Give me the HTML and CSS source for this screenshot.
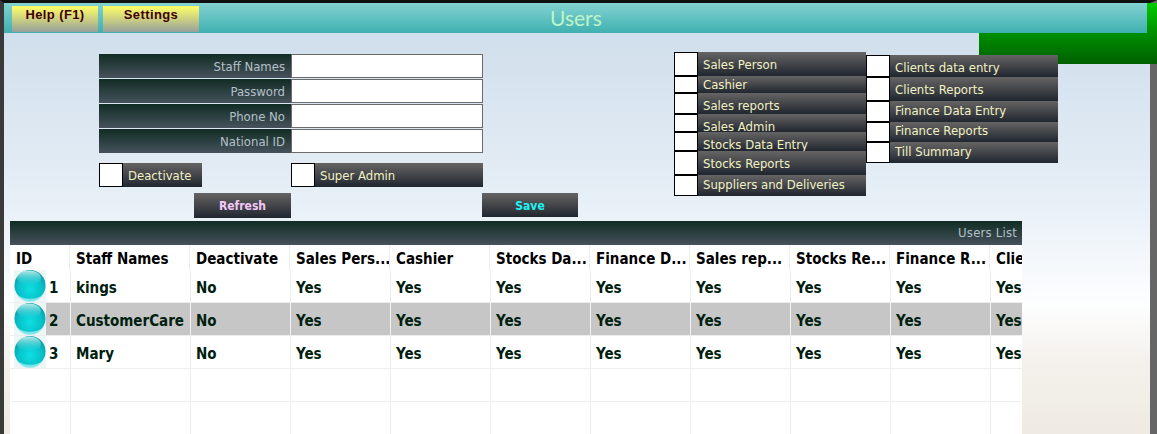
FILE: index.html
```html
<!DOCTYPE html>
<html lang="en">
<head>
<meta charset="utf-8">
<title>Users</title>
<link rel="stylesheet" href="styles.css">
</head>
<body>
<div class="window">
  <div class="green-block"></div>
  <header class="titlebar">
    <button class="menu-btn help">Help (F1)</button>
    <button class="menu-btn settings">Settings</button>
    <h1 class="title">Users</h1>
  </header>
  <main class="content">
    <section class="top">
      <form class="form">
        <div class="field"><label class="field-label">Staff Names</label><input class="field-input" type="text"></div>
        <div class="field"><label class="field-label">Password</label><input class="field-input" type="text"></div>
        <div class="field"><label class="field-label">Phone No</label><input class="field-input" type="text"></div>
        <div class="field"><label class="field-label">National ID</label><input class="field-input" type="text"></div>
        <div class="flags">
          <div class="check flag-short"><input class="box" type="checkbox"><span class="check-label">Deactivate</span></div>
          <div class="check flag-long"><input class="box" type="checkbox"><span class="check-label">Super Admin</span></div>
        </div>
        <div class="actions">
          <button class="action refresh" type="button">Refresh</button>
          <button class="action save" type="button">Save</button>
        </div>
      </form>
      <div class="perms perms-a">
        <div class="check perm h24"><input class="box" type="checkbox"><span class="check-label">Sales Person</span></div>
        <div class="check perm h17"><input class="box" type="checkbox"><span class="check-label lh15">Cashier</span></div>
        <div class="check perm h21"><input class="box" type="checkbox"><span class="check-label">Sales reports</span></div>
        <div class="check perm h18"><input class="box" type="checkbox"><span class="check-label lh22">Sales Admin</span></div>
        <div class="check perm h19"><input class="box" type="checkbox"><span class="check-label lh22">Stocks Data Entry</span></div>
        <div class="check perm h24"><input class="box" type="checkbox"><span class="check-label">Stocks Reports</span></div>
        <div class="check perm h21"><input class="box" type="checkbox"><span class="check-label lh18">Suppliers and Deliveries</span></div>
      </div>
      <div class="perms perms-b">
        <div class="check perm h22"><input class="box" type="checkbox"><span class="check-label">Clients data entry</span></div>
        <div class="check perm h24"><input class="box" type="checkbox"><span class="check-label">Clients Reports</span></div>
        <div class="check perm h21"><input class="box" type="checkbox"><span class="check-label lh17">Finance Data Entry</span></div>
        <div class="check perm h20"><input class="box" type="checkbox"><span class="check-label lh15">Finance Reports</span></div>
        <div class="check perm h21"><input class="box" type="checkbox"><span class="check-label lh17">Till Summary</span></div>
      </div>
    </section>
    <section class="list">
      <div class="list-title">Users List</div>
      <div class="grid-head">
        <div class="th">ID</div><div class="th">Staff Names</div><div class="th">Deactivate</div><div class="th">Sales Pers...</div><div class="th">Cashier</div><div class="th">Stocks Da...</div><div class="th">Finance D...</div><div class="th">Sales rep...</div><div class="th">Stocks Re...</div><div class="th">Finance R...</div><div class="th">Clie</div>
      </div>
      <div class="grid-row">
        <div class="td id"><svg class="orb" viewBox="0 0 32 32"><use href="#orb"/></svg><span class="num">1</span></div><div class="td">kings</div><div class="td">No</div><div class="td">Yes</div><div class="td">Yes</div><div class="td">Yes</div><div class="td">Yes</div><div class="td">Yes</div><div class="td">Yes</div><div class="td">Yes</div><div class="td">Yes</div>
      </div>
      <div class="grid-row selected">
        <div class="td id"><svg class="orb" viewBox="0 0 32 32"><use href="#orb"/></svg><span class="num">2</span></div><div class="td">CustomerCare</div><div class="td">No</div><div class="td">Yes</div><div class="td">Yes</div><div class="td">Yes</div><div class="td">Yes</div><div class="td">Yes</div><div class="td">Yes</div><div class="td">Yes</div><div class="td">Yes</div>
      </div>
      <div class="grid-row">
        <div class="td id"><svg class="orb" viewBox="0 0 32 32"><use href="#orb"/></svg><span class="num">3</span></div><div class="td">Mary</div><div class="td">No</div><div class="td">Yes</div><div class="td">Yes</div><div class="td">Yes</div><div class="td">Yes</div><div class="td">Yes</div><div class="td">Yes</div><div class="td">Yes</div><div class="td">Yes</div>
      </div>
      <div class="grid-row">
        <div class="td"></div><div class="td"></div><div class="td"></div><div class="td"></div><div class="td"></div><div class="td"></div><div class="td"></div><div class="td"></div><div class="td"></div><div class="td"></div><div class="td"></div>
      </div>
      <div class="grid-row">
        <div class="td"></div><div class="td"></div><div class="td"></div><div class="td"></div><div class="td"></div><div class="td"></div><div class="td"></div><div class="td"></div><div class="td"></div><div class="td"></div><div class="td"></div>
      </div>
    </section>
  </main>
</div>
<svg class="defs" width="0" height="0" aria-hidden="true">
  <defs>
    <radialGradient id="orbFill" cx="50%" cy="62%" r="55%">
      <stop offset="0" stop-color="#10dfe3"/>
      <stop offset="0.7" stop-color="#06c2ca"/>
      <stop offset="1" stop-color="#0aa4ae"/>
    </radialGradient>
    <linearGradient id="orbShine" x1="0" y1="0" x2="0" y2="1">
      <stop offset="0" stop-color="#c8efef" stop-opacity="0.95"/>
      <stop offset="1" stop-color="#30d0d4" stop-opacity="0.05"/>
    </linearGradient>
    <g id="orb">
      <rect width="32" height="32" fill="#eef6f6"/>
      <circle cx="16" cy="15.5" r="15.5" fill="url(#orbFill)"/>
      <path d="M2.5 24 A15.5 15.5 0 0 0 29.5 24 A16 10 0 0 1 2.5 24Z" fill="#8feaec" opacity="0.85"/>
      <ellipse cx="15" cy="8" rx="12" ry="7.5" fill="url(#orbShine)"/>
    </g>
  </defs>
</svg>
</body>
</html>
```

FILE: styles.css
```css
* { box-sizing: border-box; }

html, body {
  margin: 0;
  height: 434px;
  overflow: hidden;
  background: #fff;
}

.defs { position: absolute; }

.window {
  position: relative;
  height: 434px;
  border-top: 3px solid #111;
  border-left: 4px solid #3a3a3a;
  border-right: 7px solid #666;
  display: flex;
  flex-direction: column;
  font-family: "DejaVu Sans Condensed", "DejaVu Sans", sans-serif;
  font-stretch: condensed;
  background: linear-gradient(#ccdcea 0, #e6eef6 190px, #fdfeff 300px, #f4f1ec 360px, #efeae3 431px);
}

.green-block {
  position: absolute;
  top: 0;
  right: -7px;
  width: 178px;
  height: 61px;
  background: linear-gradient(#00cc00 0, #009000 30px, #005f00 61px);
}

.titlebar {
  position: relative;
  flex: none;
  height: 30px;
  margin-right: 3px;
  display: flex;
  align-items: flex-start;
  padding: 3px 0 0 8px;
  gap: 5px;
  background: linear-gradient(#84d2d2, #3fb0b0);
}

.menu-btn {
  height: 26px;
  border: 0;
  padding: 0 0 8px;
  font: bold 13px/18px "Liberation Sans", sans-serif;
  letter-spacing: 0.4px;
  color: #400000;
  background: linear-gradient(#ffff66, #98a09c);
}

.help { width: 86px; }
.settings { width: 96px; }

.title {
  position: absolute;
  left: 546px;
  top: 2px;
  margin: 0;
  font: 400 21px/26px "Lato", sans-serif;
  color: #bdf5c8;
}

.content {
  position: relative;
  flex: 1;
  min-height: 0;
  display: flex;
  flex-direction: column;
}

.top {
  flex: none;
  height: 188px;
  display: flex;
  align-items: flex-start;
  padding-left: 95px;
}

.form {
  width: 479px;
  margin-top: 21px;
  display: flex;
  flex-direction: column;
}

.field {
  display: flex;
  height: 24px;
  margin-bottom: 1px;
}

.field-label {
  width: 192px;
  padding: 1px 6px 0 0;
  text-align: right;
  font-size: 13px;
  line-height: 24px;
  color: #b4c0c8;
  background: linear-gradient(#112c24, #46525c);
}

.field-input {
  width: 192px;
  height: 24px;
  border: 1px solid #6b6b6b;
  background: #fff;
  padding: 0;
  margin: 0;
}

.check {
  display: flex;
  height: 24px;
}

.box {
  appearance: none;
  flex: none;
  width: 24px;
  height: 100%;
  margin: 0;
  border: 1px solid #000;
  background: #fff;
}

.check-label {
  flex: 1;
  min-width: 0;
  overflow: hidden;
  padding: 1px 0 0 5px;
  font-size: 13px;
  line-height: 24px;
  white-space: nowrap;
  color: #f2f2c4;
  background: linear-gradient(#666464, #20262f);
}

.flags {
  display: flex;
  margin-top: 9px;
}

.flag-short { width: 103px; margin-right: 89px; }
.flag-long { width: 192px; }

.actions {
  display: flex;
  margin: 6px 0 0 95px;
}

.action {
  border: 0;
  padding: 1px 0 0;
  font: bold 12px/24px "DejaVu Sans Condensed", "DejaVu Sans", sans-serif;
  font-stretch: condensed;
  background: linear-gradient(#666464, #20262f);
}

.refresh { width: 97px; height: 25px; margin-right: 191px; color: #f4c8f8; }
.save { width: 96px; height: 24px; color: #1ff4f4; }

.perms {
  display: flex;
  flex-direction: column;
  width: 192px;
}

.perms-a { margin: 19px 0 0 96px; }
.perms-b { margin-top: 22px; }

.perm { height: 24px; }
.h17 { height: 17px; }
.h18 { height: 18px; }
.h19 { height: 19px; }
.h20 { height: 20px; }
.h21 { height: 21px; }
.h22 { height: 22px; }
.h24 { height: 24px; }

.check-label.lh15 { line-height: 15px; }
.check-label.lh17 { line-height: 17px; }
.check-label.lh18 { line-height: 18px; }
.check-label.lh22 { line-height: 24px; }

.list {
  flex: 1;
  min-height: 0;
  width: 1012px;
  margin-left: 6px;
  overflow: hidden;
  background: #fff;
}

.list-title {
  height: 24px;
  padding-right: 5px;
  text-align: right;
  font-size: 13px;
  line-height: 24px;
  letter-spacing: 0.2px;
  color: #b4c0c8;
  background: linear-gradient(#112c24, #46525c);
}

.grid-head,
.grid-row {
  display: grid;
  font-size: 15px;
  font-weight: bold;
}

.grid-head {
  grid-template-columns: 60px 120px repeat(8, 100px) 32px;
  height: 25px;
  line-height: 28px;
  color: #000;
}

.grid-row {
  grid-template-columns: 61px 120px repeat(8, 100px) 31px;
  height: 33px;
  line-height: 36px;
  color: #00200f;
  border-bottom: 1px solid #eeeeee;
}

.th {
  padding-left: 6px;
  white-space: nowrap;
  overflow: hidden;
  border-right: 1px solid #eeeeee;
}

.th:last-child { border-right: 0; }

.td {
  padding-left: 5px;
  white-space: nowrap;
  overflow: hidden;
  border-right: 1px solid #eeeeee;
}

.td:last-child { border-right: 0; }

.selected .td { background: #c6c6c6; border-right-color: #f2f2f2; }

.td.id {
  display: flex;
  padding: 0;
  background: #fff;
}

.orb {
  flex: none;
  width: 32px;
  height: 32px;
  margin-left: 4px;
}

.num {
  flex: 1;
  padding-left: 3px;
}

.selected .num { background: #c6c6c6; }
```
